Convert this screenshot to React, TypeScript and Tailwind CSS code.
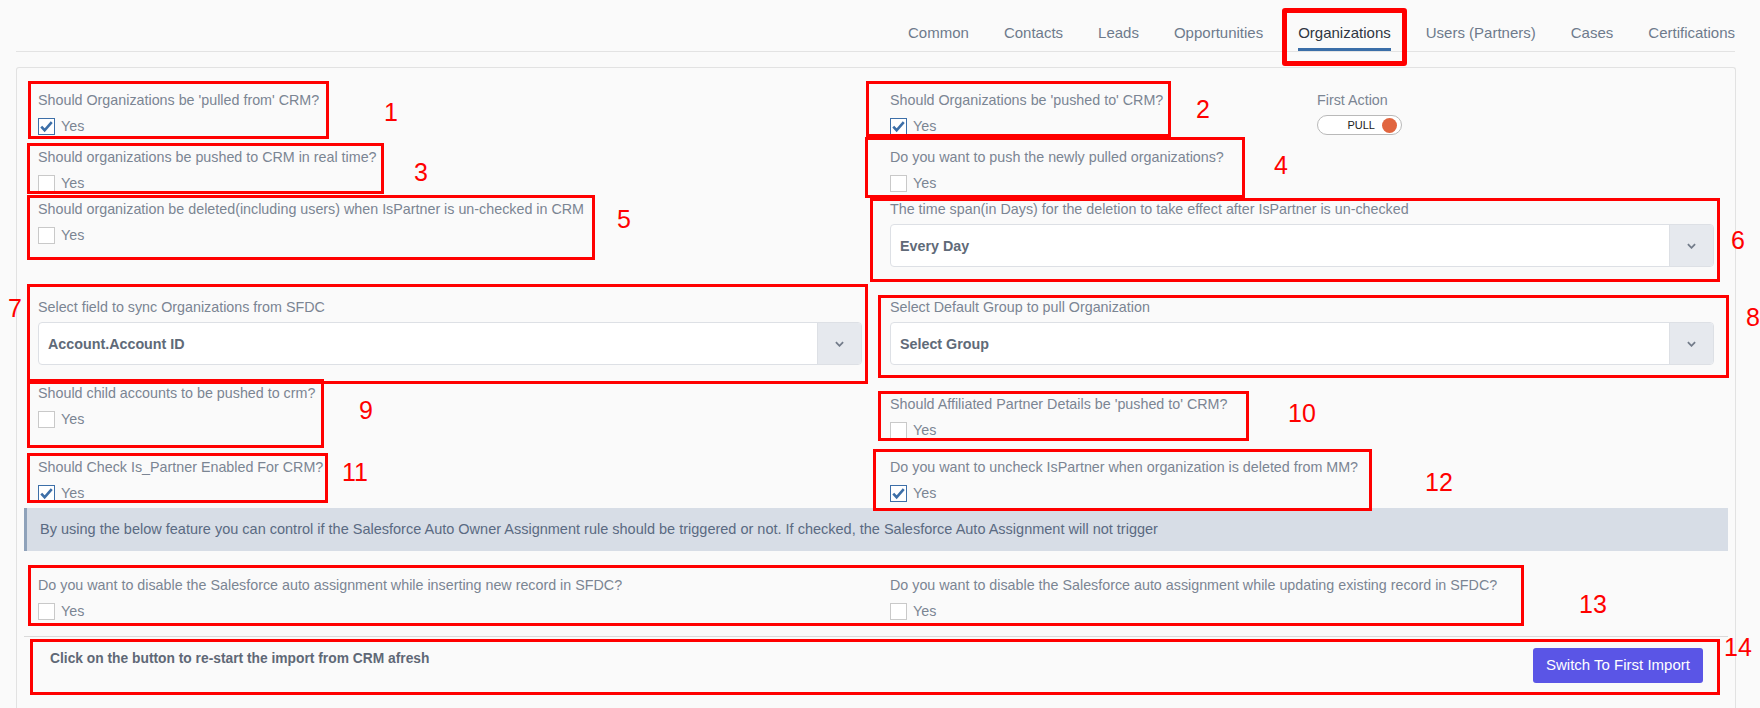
import React from "react";

const tabs = [
  "Common",
  "Contacts",
  "Leads",
  "Opportunities",
  "Organizations",
  "Users (Partners)",
  "Cases",
  "Certifications",
];

function Check({ on }: { on?: boolean }) {
  return (
    <span
      className={
        on
          ? "flex h-[17px] w-[17px] items-center justify-center border border-[#3d6fa8] bg-white"
          : "flex h-[17px] w-[17px] items-center justify-center border border-[#c9c9c9] bg-white"
      }
    >
      {on && (
        <svg viewBox="0 0 16 16" className="h-[15px] w-[15px]">
          <path d="M2.4 8.2l3.6 3.8 7.6-8.6" fill="none" stroke="#3d6fa8" strokeWidth="2.8" />
        </svg>
      )}
    </span>
  );
}

function YesField({ label, on, className = "" }: { label: string; on?: boolean; className?: string }) {
  return (
    <div className={className}>
      <div className="leading-[20px] text-[#7b8593]">{label}</div>
      <div className="mt-[8px] flex h-[17px] items-center gap-[6px]">
        <Check on={on} />
        <span className="leading-[17px] text-[#7b8593]">Yes</span>
      </div>
    </div>
  );
}

function SelectBox({ label, value }: { label: string; value: string }) {
  return (
    <div className="px-[14px]">
      <div className="leading-[20px] text-[#7b8593]">{label}</div>
      <div className="mt-[5px] flex h-[43px] overflow-hidden rounded-[4px] border border-[#dde0e5] bg-white">
        <div className="flex flex-1 items-center pl-[9px] pt-[2px] font-semibold text-[#606a78]">{value}</div>
        <div className="flex w-[44px] items-center justify-center border-l border-[#dde0e5] bg-[#e6e9ee]">
          <svg viewBox="0 0 10 6" className="h-[6px] w-[9px]">
            <path d="M1 1l4 4 4-4" fill="none" stroke="#737c8a" strokeWidth="2" />
          </svg>
        </div>
      </div>
    </div>
  );
}

// red annotation boxes laid over the screenshot
const boxes = [
  { l: 28, t: 81, w: 301, h: 58 },
  { l: 866, t: 81, w: 305, h: 56 },
  { l: 27, t: 143, w: 357, h: 51 },
  { l: 865, t: 137, w: 380, h: 61 },
  { l: 27, t: 195, w: 568, h: 65 },
  { l: 870, t: 198, w: 850, h: 84 },
  { l: 27, t: 284, w: 841, h: 100 },
  { l: 878, t: 295, w: 851, h: 83 },
  { l: 27, t: 379, w: 297, h: 69 },
  { l: 878, t: 391, w: 371, h: 50 },
  { l: 27, t: 453, w: 301, h: 50 },
  { l: 873, t: 449, w: 499, h: 62 },
  { l: 28, t: 565, w: 1496, h: 61 },
  { l: 30, t: 639, w: 1690, h: 56 },
];

const marks = [
  { n: "1", l: 384, c: 112 },
  { n: "2", l: 1196, c: 109 },
  { n: "3", l: 414, c: 172 },
  { n: "4", l: 1274, c: 165 },
  { n: "5", l: 617, c: 219 },
  { n: "6", l: 1731, c: 240 },
  { n: "7", l: 8, c: 308 },
  { n: "8", l: 1746, c: 317 },
  { n: "9", l: 359, c: 410 },
  { n: "10", l: 1288, c: 413 },
  { n: "11", l: 342, c: 472 },
  { n: "12", l: 1425, c: 482 },
  { n: "13", l: 1579, c: 604 },
  { n: "14", l: 1724, c: 647 },
];

export default function App() {
  return (
    <div className="relative flex h-[708px] flex-col overflow-hidden bg-[#fafafa] font-['Liberation_Sans',Arial,sans-serif] text-[14.3px]">
      <nav className="ml-[16px] mr-[25px] flex h-[52px] items-end justify-end gap-[35px] border-b border-[#e3e3e3] text-[15px]">
        {tabs.map((t) => (
          <div
            key={t}
            className={
              t === "Organizations"
                ? "border-b-[3px] border-[#3a6ea8] pb-[5px] leading-[20px] text-[#2e3642]"
                : "border-b-[3px] border-transparent pb-[5px] leading-[20px] text-[#6e7a8c]"
            }
          >
            {t}
          </div>
        ))}
      </nav>

      <div className="ml-[16px] mr-[24px] mt-[15px] flex-1 rounded-t-[3px] border-x border-t border-[#e2e2e2] bg-[#fafafa]">
        <div className="px-[7px] pt-[22px]">
          <div className="grid grid-cols-2">
            <YesField className="px-[14px]" label="Should Organizations be 'pulled from' CRM?" on />
            <div className="flex px-[14px]">
              <YesField className="w-[427px]" label="Should Organizations be 'pushed to' CRM?" on />
              <div>
                <div className="leading-[20px] text-[#7b8593]">First Action</div>
                <div className="mt-[5px] flex h-[20px] w-[85px] items-center justify-end gap-[7px] rounded-full border border-[#b9b9b9] bg-white pr-[4px]">
                  <span className="text-[11px] leading-none text-[#222]">PULL</span>
                  <span className="h-[15px] w-[15px] rounded-full bg-[#e1653f]" />
                </div>
              </div>
            </div>
          </div>

          <div className="mt-[12px] grid grid-cols-2">
            <YesField className="px-[14px]" label="Should organizations be pushed to CRM in real time?" />
            <YesField className="px-[14px]" label="Do you want to push the newly pulled organizations?" />
          </div>

          <div className="mt-[7px] grid grid-cols-2 items-start">
            <YesField
              className="px-[14px]"
              label="Should organization be deleted(including users) when IsPartner is un-checked in CRM"
            />
            <SelectBox
              label="The time span(in Days) for the deletion to take effect after IsPartner is un-checked"
              value="Every Day"
            />
          </div>

          <div className="mt-[30px] grid grid-cols-2">
            <SelectBox label="Select field to sync Organizations from SFDC" value="Account.Account ID" />
            <SelectBox label="Select Default Group to pull Organization" value="Select Group" />
          </div>

          <div className="mt-[18px] grid grid-cols-2 items-start">
            <YesField className="px-[14px]" label="Should child accounts to be pushed to crm?" />
            <YesField className="px-[14px] pt-[11px]" label="Should Affiliated Partner Details be 'pushed to' CRM?" />
          </div>

          <div className="mt-[18px] grid grid-cols-2">
            <YesField className="px-[14px]" label="Should Check Is_Partner Enabled For CRM?" on />
            <YesField className="px-[14px]" label="Do you want to uncheck IsPartner when organization is deleted from MM?" on />
          </div>

          <div className="mt-[6px] flex h-[43px] items-center border-l-[3px] border-[#8fa2ba] bg-[#d7dde6] pl-[13px] text-[14.5px] text-[#5a6a82]">
            By using the below feature you can control if the Salesforce Auto Owner Assignment rule should be triggered or
            not. If checked, the Salesforce Auto Assignment will not trigger
          </div>

          <div className="mt-[24px] grid grid-cols-2">
            <YesField
              className="px-[14px]"
              label="Do you want to disable the Salesforce auto assignment while inserting new record in SFDC?"
            />
            <YesField
              className="px-[14px]"
              label="Do you want to disable the Salesforce auto assignment while updating existing record in SFDC?"
            />
          </div>
        </div>

        <div className="mx-[7px] mt-[16px] flex items-start justify-between border-t border-[#dadada] pl-[26px] pr-[25px] pt-[11px]">
          <div className="mt-[1px] text-[13.8px] font-semibold leading-[20px] text-[#5f6876]">
            Click on the button to re-start the import from CRM afresh
          </div>
          <button className="h-[35px] w-[170px] rounded-[3px] bg-[#5a55e6] text-[15px] text-white">
            Switch To First Import
          </button>
        </div>
      </div>

      <div className="pointer-events-none absolute left-[1282px] top-[8px] h-[58px] w-[125px] rounded-[3px] border-[5px] border-[#ff0000]" />
      {boxes.map((b, i) => (
        <div
          key={i}
          className="pointer-events-none absolute border-[3px] border-[#ff0000]"
          style={{ left: b.l, top: b.t, width: b.w, height: b.h }}
        />
      ))}
      {marks.map((m) => (
        <div
          key={m.n}
          className="pointer-events-none absolute text-[25px] leading-[25px] text-[#ff0000]"
          style={{ left: m.l, top: m.c - 12 }}
        >
          {m.n}
        </div>
      ))}
    </div>
  );
}
